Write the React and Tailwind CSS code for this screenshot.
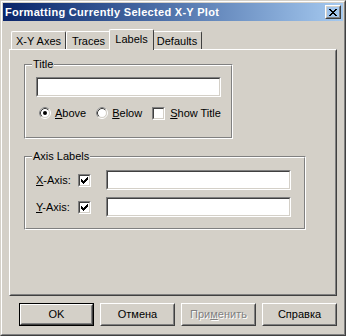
import React from 'react';

// classic 3D edges
const Raised = ({ className = '', children }) => (
  <div className={`border border-t-white border-l-white border-r-[#404040] border-b-[#404040] ${className}`}>
    <div className="flex h-full w-full items-center justify-center border border-t-[#d4d0c8] border-l-[#d4d0c8] border-r-[#808080] border-b-[#808080]">
      {children}
    </div>
  </div>
);

const Sunken = ({ className = '' }) => (
  <div className={`border border-t-[#808080] border-l-[#808080] border-r-white border-b-white ${className}`}>
    <div className="h-full w-full border border-t-[#404040] border-l-[#404040] border-r-[#d4d0c8] border-b-[#d4d0c8] bg-white" />
  </div>
);

const Checkbox = ({ checked }) => (
  <div className="h-[13px] w-[13px] shrink-0 border border-t-[#808080] border-l-[#808080] border-r-white border-b-white">
    <div className="h-full w-full border border-t-[#404040] border-l-[#404040] border-r-[#d4d0c8] border-b-[#d4d0c8] bg-white">
      {checked && (
        <svg width="9" height="9" viewBox="0 0 9 9">
          <path d="M1 3h1v1h1v1h1V4h1V3h1V2h1V1h1v3h-1v1h-1v1h-1v1h-1v1H3V7H2V6H1z" fill="#000" />
        </svg>
      )}
    </div>
  </div>
);

const Radio = ({ checked }) => (
  <svg width="12" height="12" viewBox="0 0 12 12" className="shrink-0">
    <circle cx="6" cy="6" r="5.5" fill="none" stroke="#fff" />
    <path d="M2.11 9.89 A5.5 5.5 0 0 1 9.89 2.11" fill="none" stroke="#808080" />
    <circle cx="6" cy="6" r="4.5" fill="#fff" stroke="#d4d0c8" />
    <path d="M2.82 9.18 A4.5 4.5 0 0 1 9.18 2.82" fill="none" stroke="#404040" />
    {checked && <circle cx="6" cy="6" r="2" fill="#000" />}
  </svg>
);

const GroupBox = ({ title, className = '', children }) => (
  <div className={`relative border border-t-[#808080] border-l-[#808080] border-r-white border-b-white ${className}`}>
    <div className="h-full w-full border border-t-white border-l-white border-r-[#808080] border-b-[#808080]">
      {children}
    </div>
    <span className="absolute left-[7px] top-[-8px] bg-[#d4d0c8] px-[1px] leading-[14px]">{title}</span>
  </div>
);

const tabs = ['X-Y Axes', 'Traces', 'Labels', 'Defaults'];

export default function App() {
  return (
    <div className="h-[336px] w-[346px] border border-t-[#d4d0c8] border-l-[#d4d0c8] border-r-[#404040] border-b-[#404040] bg-[#d4d0c8] font-['Liberation_Sans',Arial,sans-serif] text-[11px] text-black">
      <div className="flex h-full w-full flex-col border border-t-white border-l-white border-r-[#808080] border-b-[#808080] p-[1px]">
        {/* title bar */}
        <div className="flex h-[18px] items-center justify-between bg-gradient-to-r from-[#0a246a] to-[#a6caf0] pl-[2px] pr-[2px]">
          <span className="text-[11px] font-bold leading-[18px] tracking-[0.3px] text-white">Formatting Currently Selected X-Y Plot</span>
          <Raised className="h-[14px] w-[16px]">
            <svg width="8" height="7" viewBox="0 0 8 7">
              <path d="M0 0h2v1h1v1h2V1h1V0h2v1H7v1H6v1H5v1h1v1h1v1h1v1H6V6H5V5H3v1H2v1H0V6h1V5h1V4h1V3H2V2H1V1H0z" fill="#000" />
            </svg>
          </Raised>
        </div>

        {/* tabs */}
        <div className="ml-[6px] mt-[8px] flex h-[20px] items-end pl-[2px]">
          {tabs.map((t) =>
            t === 'Labels' ? (
              <div
                key={t}
                className="relative z-10 -mx-[2px] -mb-px flex h-[21px] w-[45px] items-start justify-center rounded-t-[2px] border-l border-r border-t border-l-white border-t-white border-r-[#404040] bg-[#d4d0c8] pt-[2px]"
              >
                <span className="leading-[14px]">{t}</span>
              </div>
            ) : (
              <div
                key={t}
                className={`flex h-[18px] items-start justify-center rounded-t-[2px] border-l border-r border-t border-l-white border-t-white border-r-[#404040] pt-[2px] ${
                  t === 'X-Y Axes' ? 'w-[55px]' : t === 'Traces' ? 'w-[45px]' : 'w-[50px]'
                }`}
              >
                <span className="leading-[14px]">{t}</span>
              </div>
            )
          )}
        </div>

        {/* tab panel */}
        <div className="ml-[6px] h-[247px] w-[328px] border border-t-white border-l-white border-r-[#404040] border-b-[#404040]">
          <div className="h-full w-full border border-transparent border-r-[#808080] border-b-[#808080] pl-[13px] pt-[13px]">
            <GroupBox title="Title" className="h-[75px] w-[209px]">
              <div className="flex flex-col pl-[10px] pt-[11px]">
                <Sunken className="h-[20px] w-[185px]" />
                <div className="mt-[9px] flex items-center pl-[3px]">
                  <Radio checked />
                  <span className="ml-[4px] leading-[14px]"><u>A</u>bove</span>
                  <span className="ml-[10px]"><Radio /></span>
                  <span className="ml-[4px] leading-[14px]"><u>B</u>elow</span>
                  <span className="ml-[10px]"><Checkbox /></span>
                  <span className="ml-[5px] leading-[14px]"><u>S</u>how Title</span>
                </div>
              </div>
            </GroupBox>

            <GroupBox title="Axis Labels" className="mt-[17px] h-[74px] w-[282px]">
              <div className="flex flex-col gap-[7px] pl-[10px] pt-[12px]">
                {['X', 'Y'].map((a) => (
                  <div key={a} className="flex items-center">
                    <span className="w-[42px] leading-[14px]"><u>{a}</u>-Axis:</span>
                    <Checkbox checked />
                    <Sunken className="ml-[15px] h-[20px] w-[185px]" />
                  </div>
                ))}
              </div>
            </GroupBox>
          </div>
        </div>

        {/* buttons */}
        <div className="mt-[7px] flex w-[334px] justify-end gap-[6px]">
          <div className="h-[23px] w-[75px] border border-black">
            <Raised className="h-full w-full">OK</Raised>
          </div>
          <Raised className="h-[23px] w-[75px]">Отмена</Raised>
          <Raised className="h-[23px] w-[75px]">
            <span className="text-[#808080] [text-shadow:1px_1px_0_#fff]">При<u>м</u>енить</span>
          </Raised>
          <Raised className="h-[23px] w-[75px]">Справка</Raised>
        </div>
      </div>
    </div>
  );
}
